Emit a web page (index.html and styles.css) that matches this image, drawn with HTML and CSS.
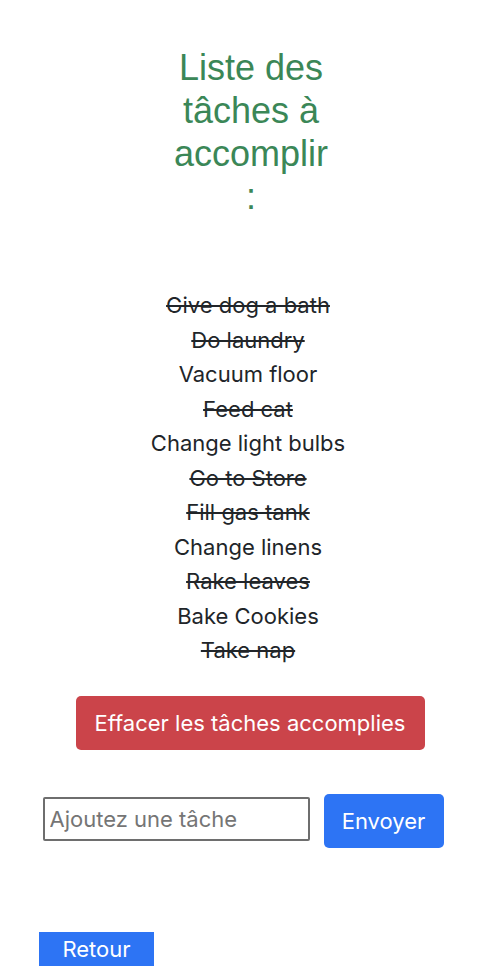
FILE: index.html
```html
<!DOCTYPE html>
<html lang="fr">
<head>
<meta charset="utf-8">
<link rel="stylesheet" href="styles.css">
</head>
<body>
<main class="page">
  <h1 class="title">Liste des tâches à accomplir :</h1>
  <ul class="tasks">
    <li class="done">Give dog a bath</li>
    <li class="done">Do laundry</li>
    <li>Vacuum floor</li>
    <li class="done">Feed cat</li>
    <li>Change light bulbs</li>
    <li class="done">Go to Store</li>
    <li class="done">Fill gas tank</li>
    <li>Change linens</li>
    <li class="done">Rake leaves</li>
    <li>Bake Cookies</li>
    <li class="done">Take nap</li>
  </ul>
  <div class="clear-row">
    <button class="btn btn-danger">Effacer les tâches accomplies</button>
  </div>
  <form class="add-row">
    <input class="task-input" type="text" placeholder="Ajoutez une tâche">
    <button type="button" class="btn btn-primary">Envoyer</button>
  </form>
  <div class="back-row">
    <button class="back">Retour</button>
  </div>
</main>
</body>
</html>
```
FILE: styles.css
```css
* { box-sizing: border-box; }
body {
  margin: 0;
  font-family: Inter, "Noto Sans", sans-serif;
  color: #212529;
  background: #fff;
}
.page {
  display: flex;
  flex-direction: column;
  align-items: center;
  padding-top: 46px;
}
.title {
  width: 164px;
  margin: 0 0 70px 6px;
  font-family: "Liberation Sans", Arial, sans-serif;
  font-weight: 400;
  font-size: 36px;
  line-height: 43px;
  text-align: center;
  color: #3b8757;
}
.tasks {
  list-style: none;
  margin: 0;
  padding: 0;
  text-align: center;
  font-size: 22px;
  line-height: 34.5px;
}
.tasks li.done { text-decoration: line-through; }
.clear-row { margin: 28px 0 0 4px; }
.btn {
  border: none;
  border-radius: 5px;
  color: #fff;
  font-family: Inter, "Noto Sans", sans-serif;
  font-size: 22px;
  cursor: pointer;
}
.btn-danger {
  background: #cb444a;
  width: 349px;
  height: 54px;
}
.add-row {
  display: flex;
  align-items: center;
  gap: 14px;
  margin: 44px 0 0 -10px;
}
.task-input {
  width: 267px;
  height: 44px;
  margin-bottom: 4px;
  border: 2px solid #6e6e6e;
  border-radius: 2px;
  padding: 0 5px;
  font-family: Inter, "Noto Sans", sans-serif;
  font-size: 22px;
}
.task-input::placeholder { color: #757575; }
.btn-primary {
  background: #2d74f4;
  width: 120px;
  height: 54px;
}
.back-row {
  align-self: stretch;
  padding-left: 39px;
  margin-top: 84px;
}
.back {
  width: 115px;
  height: 34px;
  border: none;
  background: #2d74f4;
  color: #fff;
  font-family: Inter, "Noto Sans", sans-serif;
  font-size: 22px;
  padding: 0;
}
```
